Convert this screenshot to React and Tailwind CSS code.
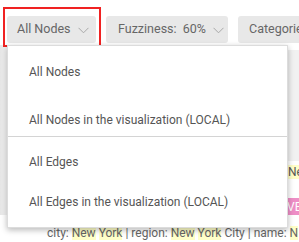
import React from "react";

function Chevron() {
  return (
    <svg width="11" height="7" viewBox="0 0 11 7" className="ml-[7px] mt-[2px] shrink-0">
      <path d="M0.5 0.8 L5.5 5.8 L10.5 0.8" fill="none" stroke="#a8a8a8" strokeWidth="1" />
    </svg>
  );
}

function Hl({ children }) {
  return <span className="bg-[#ffffc8]">{children}</span>;
}

export default function App() {
  return (
    <div className="relative w-[299px] h-[242px] overflow-hidden bg-white text-[#555]" style={{ fontFamily: "Roboto, 'Liberation Sans', sans-serif" }}>
      {/* toolbar */}
      <div className="flex items-center gap-[10px] pl-[7px] pt-[13px] h-[45px] whitespace-nowrap">
        <div className="relative shrink-0 flex items-center h-[27px] w-[89px] pl-[10px] rounded-[3px] bg-[#e8e8e8] text-[12.5px] text-[#666]">
          All Nodes
          <Chevron />
          <div className="absolute left-[-4px] top-[-9px] w-[98px] h-[40px] border-2 border-[#f02222]" />
        </div>
        <div className="shrink-0 flex items-center h-[27px] w-[122px] pl-[12px] rounded-[3px] bg-[#e8e8e8] text-[12.5px] text-[#666]">
          Fuzziness:&nbsp; 60%
          <Chevron />
        </div>
        <div className="shrink-0 flex items-center h-[27px] w-[100px] pl-[11px] rounded-[3px] bg-[#e8e8e8] text-[12.5px] text-[#666]">
          Categories
        </div>
      </div>

      {/* background content */}
      <div className="flex h-[170px]">
        <div className="w-[7px] bg-gradient-to-r from-[#e6e6e6] to-[#f4f4f4]" />
        <div className="flex-1 flex flex-col items-end pt-[5px]">
          <div className="w-[14px] h-[118px] bg-[#f1f1f1]" />
          <div className="w-[11px] text-[12px] leading-[16px] mt-[3px] overflow-hidden whitespace-nowrap"><Hl>Ne</Hl></div>
          <div className="mt-[19px] w-[32px] h-[18px] bg-[#ee8ec6] rounded-l-[3px] text-white text-[12px] leading-[18px] pl-[20px] overflow-hidden whitespace-nowrap">VE</div>
        </div>
      </div>
      <div className="pl-[47px] mt-[10px] text-[12px] leading-[16px] text-[#666] whitespace-nowrap">
        city: <Hl>New</Hl> <Hl>York</Hl> | region: <Hl>New</Hl> <Hl>York</Hl> City | name: <Hl>N</Hl>
      </div>

      {/* dropdown menu */}
      <div className="absolute left-[7px] top-[45px] w-[281px] h-[183px] bg-white border border-[#dcdcdc] shadow-[0_2px_6px_rgba(0,0,0,0.28)] text-[12px] text-[#555]">
        <div className="h-[90px] flex flex-col pt-[12px]">
          <div className="h-[28px] flex items-center pl-[21px]">All Nodes</div>
          <div className="h-[20px]" />
          <div className="h-[28px] flex items-center pl-[21px]">All Nodes in the visualization (LOCAL)</div>
        </div>
        <div className="h-px bg-[#d4d4d4]" />
        <div className="flex flex-col pt-[11px]">
          <div className="h-[28px] flex items-center pl-[21px]">All Edges</div>
          <div className="h-[12px]" />
          <div className="h-[28px] flex items-center pl-[21px]">All Edges in the visualization (LOCAL)</div>
        </div>
      </div>
    </div>
  );
}
